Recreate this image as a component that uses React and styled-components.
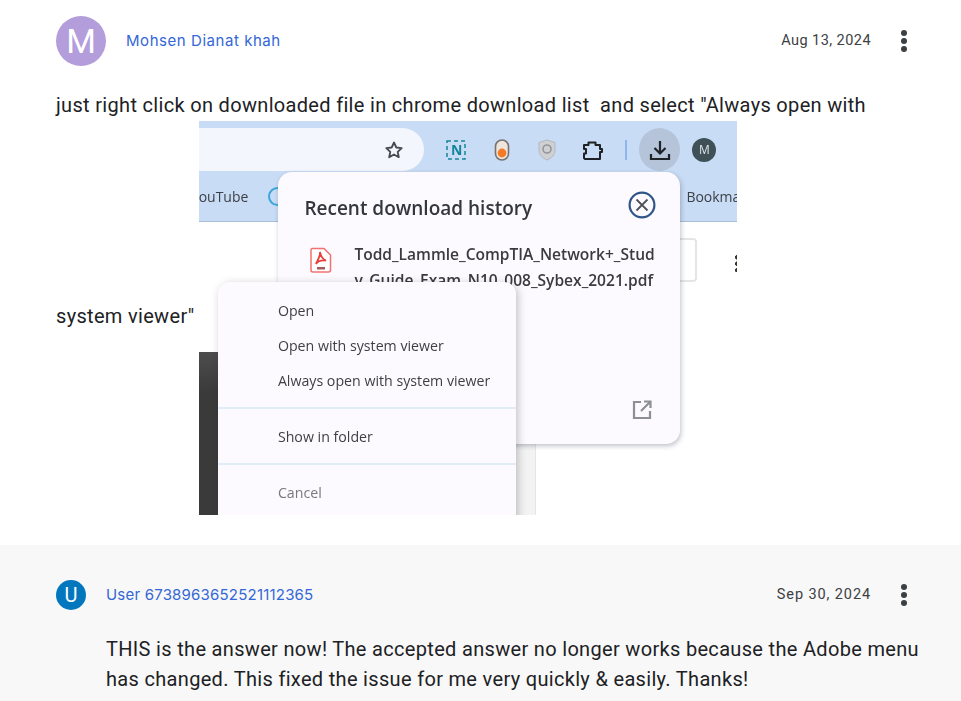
import React from "react";
import styled, { createGlobalStyle } from "styled-components";

const Global = createGlobalStyle`
  html, body { margin: 0; padding: 0; background: #fff; }
  body { font-family: Roboto, "Liberation Sans", sans-serif; overflow: hidden; height: 701px; }
`;
const Page = styled.div`width: 961px; height: 701px; overflow: hidden;`;
const Answer = styled.section`
  padding: 16px 33px 30px 56px;
  background: #fff;
`;
const Reply = styled.section`
  padding: 35px 33px 0 56px;
  background: #f8f8f8;
  height: 121px;
`;
const Header = styled.header`display: flex; align-items: center; padding-right: 12px;`;
const Avatar = styled.div`
  width: ${p => p.$size}px; height: ${p => p.$size}px; border-radius: 50%;
  background: ${p => p.$bg}; color: #fff;
  display: flex; align-items: center; justify-content: center;
  font: 400 ${p => p.$font}px/1 Roboto, sans-serif;
  flex: none;
`;
const Name = styled.a`
  margin-left: 20px; flex: 1;
  color: #3367d6; font: 400 15px/20px Inter, sans-serif; letter-spacing: ${p => p.$track}px;
`;
const DateText = styled.span`
  color: #3c4043; font: 400 14.5px/20px Roboto, sans-serif; letter-spacing: ${p => p.$track}px;
`;
const Kebab = styled.svg`width: 24px; height: 24px; margin-left: 21px; display: block; flex: none;`;
const Body = styled.p`
  margin: 24px 0 0; color: #202124;
  font: 400 20px/30px Roboto, sans-serif; letter-spacing: 0.32px;
  white-space: pre-wrap;
  padding-left: ${p => p.$indent || 0}px;
`;
const Shot = styled.span`
  display: inline-block; vertical-align: middle;
  width: 538px; height: 394px; margin-left: 5px; margin-top: 1px;
  position: relative; overflow: hidden; background: #fff;
  font-family: "Open Sans", "Noto Sans", sans-serif; color: #2b2b2f;
  line-height: normal; letter-spacing: 0; filter: blur(0.3px);
`;
const Toolbar = styled.div`
  height: 58px; background: #c9dcf5; display: flex; align-items: center; 
`;
const Omnibox = styled.div`
  width: 225px; height: 43px; margin-top: -1px; background: #f3f6fc; border-radius: 0 22px 22px 0;
  display: flex; align-items: center; justify-content: flex-end; padding-right: 20px; box-sizing: border-box;
  flex: none;
`;
const ExtIcon = styled.svg`display: block; flex: none; margin-left: ${p => p.$ml}px;`;
const NText = styled.text`font: 700 14px "Open Sans", sans-serif; fill: #14859b;`;
const Sep = styled.div`width: 2px; height: 20px; background: #8fb6ea; margin-left: 21px; flex: none;`;
const DownloadBtn = styled.div`
  width: 41px; height: 43px; margin-top: -1px; border-radius: 50%; background: #b5c4d9; margin-left: 12px;
  display: flex; align-items: center; justify-content: center; flex: none;
`;
const Profile = styled.div`
  width: 24px; height: 24px; border-radius: 50%; background: #3f5157; color: #dfe6e8; margin-left: 12px;
  font: 400 12px/24px "Open Sans", sans-serif; text-align: center; flex: none;
`;
const Bookmarks = styled.div`
  height: 43px; background: #c9dcf5; border-bottom: 1px solid #a9bdd8; box-sizing: border-box;
  display: flex; align-items: center; font-size: 14px; color: #3b3f46; position: relative; padding-bottom: 8px;
`;
const BmFirst = styled.span`margin-left: -1px; width: 50px; overflow: hidden; white-space: nowrap; direction: rtl;`;
const BmGlobe = styled.span`
  width: 19px; height: 19px; border-radius: 50%; border: 2px solid #3ea6d8; box-sizing: border-box; margin-left: 20px;
`;
const BmLast = styled.span`position: absolute; left: 487px; top: 8px; white-space: nowrap;`;
const Field = styled.div`
  position: absolute; left: 440px; top: 117px; width: 58px; height: 44px; box-sizing: border-box;
  border: 2px solid #e5e5e5; border-radius: 4px; background: #fff;
`;
const EdgeDots = styled.div`
  position: absolute; left: 536px; top: 133px; width: 4px; height: 18px;
  background: radial-gradient(circle, #3a3128 1.9px, transparent 2.2px) 0 0 / 4px 6.5px repeat-y;
`;
const Backdrop = styled.div`
  position: absolute; left: 0; top: 231px; width: 337px; height: 163px;
  background: #f3f3f3; border-right: 1px solid #e6e6e6; box-sizing: border-box;
`;
const DarkArea = styled.div`
  width: 40px; height: 100%; background: linear-gradient(#4d4d4d, #3a3a3a 25%, #3a3a3a); 
`;
const History = styled.div`
  position: absolute; left: 79px; top: 51px; width: 402px; height: 272px; box-sizing: border-box;
  background: #fdfaff; border-radius: 14px; box-shadow: 1px 2px 5px rgba(40,50,70,.3);
`;
const HistoryTitle = styled.div`
  position: absolute; left: 26px; top: 22px; font-size: 19px; font-weight: 600; color: #33373d; white-space: nowrap; line-height: 28px;
`;
const CloseIcon = styled.svg`position: absolute; left: 350px; top: 19px;`;
const PdfIcon = styled.svg`position: absolute; left: 32px; top: 75px;`;
const FileName = styled.div`
  position: absolute; left: 76px; top: 69px; width: 304px; font-size: 15.55px; font-weight: 600; line-height: 26px; color: #3a3a40; word-break: break-all;
`;
const OpenIcon = styled.svg`position: absolute; left: 353px; top: 227px;`;
const Menu = styled.div`
  position: absolute; left: 19px; top: 161px; width: 298px; height: 250px; box-sizing: border-box;
  background: #fdfaff; border-radius: 12px; box-shadow: 2px 2px 8px rgba(40,40,50,.28);
  padding-top: 11px; display: flex; flex-direction: column;
`;
const MenuItem = styled.div`
  height: 35px; padding-left: 59.5px; font-size: 14.2px; line-height: 35px; color: ${p => p.$muted ? "#77797e" : "#3e4046"}; white-space: nowrap;
`;
const MenuRule = styled.div`height: 2px; background: #e2ebf8; margin: ${p => p.$m};`;

const Dots = () => (
  <Kebab viewBox="0 0 24 24"><g fill="#3c4043"><circle cx="12" cy="4" r="3"/><circle cx="12" cy="12" r="3"/><circle cx="12" cy="20" r="3"/></g></Kebab>
);

const Screenshot = () => (
  <Shot>
    <Toolbar>
      <Omnibox>
        <svg width="20" height="20" viewBox="0 0 20 20"><path d="M10 2.5l2.3 5 5.4.6-4 3.7 1.1 5.4-4.8-2.7-4.8 2.7 1.1-5.4-4-3.7 5.4-.6z" fill="none" stroke="#45484e" strokeWidth="1.8" strokeLinejoin="round"/></svg>
      </Omnibox>
      <ExtIcon $ml={22} width="20" height="20" viewBox="0 0 20 20">
        <rect x="1" y="1" width="18" height="18" fill="none" stroke="#14859b" strokeWidth="1.5" strokeDasharray="4 3"/>
        <NText x="5" y="15">N</NText>
      </ExtIcon>
      <ExtIcon $ml={28} width="16" height="22" viewBox="0 0 16 22">
        <rect x="1.5" y="1" width="13" height="20" rx="6.5" fill="#eee5dc" stroke="#77726e" strokeWidth="1.6"/>
        <circle cx="8" cy="14" r="4.4" fill="#f47a26"/>
      </ExtIcon>
      <ExtIcon $ml={28} width="18" height="22" viewBox="0 0 18 22">
        <path d="M9 1l8 2.5v8c0 4.500-3.500 7.500-8 9.500-4.500-2-8-5-8-9.500v-8z" fill="#cfd0d3" stroke="#b5b7bb"/>
        <circle cx="9" cy="10" r="4" fill="none" stroke="#94969a" strokeWidth="1.6"/>
      </ExtIcon>
      <ExtIcon $ml={26} width="22" height="22" viewBox="0 0 22 22">
        <path d="M2 6h4.500V3.500h7V6H18v4h2v3h-2v7H3l-1-1v-4.500h2v-4.500H2z" fill="none" stroke="#1f2124" strokeWidth="2" strokeLinejoin="round"/>
      </ExtIcon>
      <Sep />
      <DownloadBtn>
        <svg width="22" height="22" viewBox="0 0 22 22"><path d="M11 2v12M5.500 9l5.500 5.500L16.500 9M2 15v5h18v-5" fill="none" stroke="#1f2226" strokeWidth="2.200"/></svg>
      </DownloadBtn>
      <Profile>M</Profile>
    </Toolbar>
    <Bookmarks>
      <BmFirst>YouTube</BmFirst>
      <BmGlobe />
      <BmLast>Bookmarks</BmLast>
    </Bookmarks>
    <Field />
    <EdgeDots />
    <Backdrop><DarkArea /></Backdrop>
    <History>
      <HistoryTitle>Recent download history</HistoryTitle>
      <CloseIcon width="28" height="28" viewBox="0 0 28 28"><circle cx="14" cy="14" r="12.400" fill="none" stroke="#2f5588" strokeWidth="2.200"/><path d="M8.500 8.500l11 11M19.500 8.500l-11 11" stroke="#4c5158" strokeWidth="1.800"/></CloseIcon>
      <PdfIcon width="22" height="26" viewBox="0 0 22 26">
        <path d="M2 1.500h12l6.500 6.500v15a2 2 0 0 1-2 2H3a2 2 0 0 1-2-2V2.500z" fill="#fff" stroke="#f07272" strokeWidth="1.500"/>
        <path d="M10 5c.5 3 2 7 6 8.500-4-.5-8 .5-10 3.500 1-3 4.500-7 4-12z" fill="none" stroke="#e9403c" strokeWidth="1.800"/>
        <rect x="7" y="20" width="8" height="2.500" fill="#a45a5a"/>
      </PdfIcon>
      <FileName>Todd_Lammle_CompTIA_Network+_Study_Guide_Exam_N10_008_Sybex_2021.pdf</FileName>
      <OpenIcon width="22" height="22" viewBox="0 0 22 22"><path d="M10 3H3v16h16v-7M13 2.500h6.500V9M19 3l-9 9" fill="none" stroke="#8d8f92" strokeWidth="2.200"/></OpenIcon>
    </History>
    <Menu>
      <MenuItem>Open</MenuItem>
      <MenuItem>Open with system viewer</MenuItem>
      <MenuItem>Always open with system viewer</MenuItem>
      <MenuRule $m="9px 0 10px" />
      <MenuItem>Show in folder</MenuItem>
      <MenuRule $m="9px 0 10px" />
      <MenuItem $muted>Cancel</MenuItem>
    </Menu>
  </Shot>
);

export default function App() {
  return (
    <Page>
      <Global />
      <Answer>
        <Header>
          <Avatar $size={50} $bg="#b39ddb" $font={34}>M</Avatar>
          <Name $track={0.55}>Mohsen Dianat khah</Name>
          <DateText $track={0.45}>Aug 13, 2024</DateText>
          <Dots />
        </Header>
        <Body>just right click on downloaded file in chrome download list  and select "Always open with system viewer"<Screenshot /></Body>
      </Answer>
      <Reply>
        <Header>
          <Avatar $size={30} $bg="#0277bd" $font={20}>U</Avatar>
          <Name $track={0.2}>User 6738963652521112365</Name>
          <DateText $track={0.9}>Sep 30, 2024</DateText>
          <Dots />
        </Header>
        <Body $indent={50}>THIS is the answer now! The accepted answer no longer works because the Adobe menu has changed. This fixed the issue for me very quickly &amp; easily. Thanks!</Body>
      </Reply>
    </Page>
  );
}
